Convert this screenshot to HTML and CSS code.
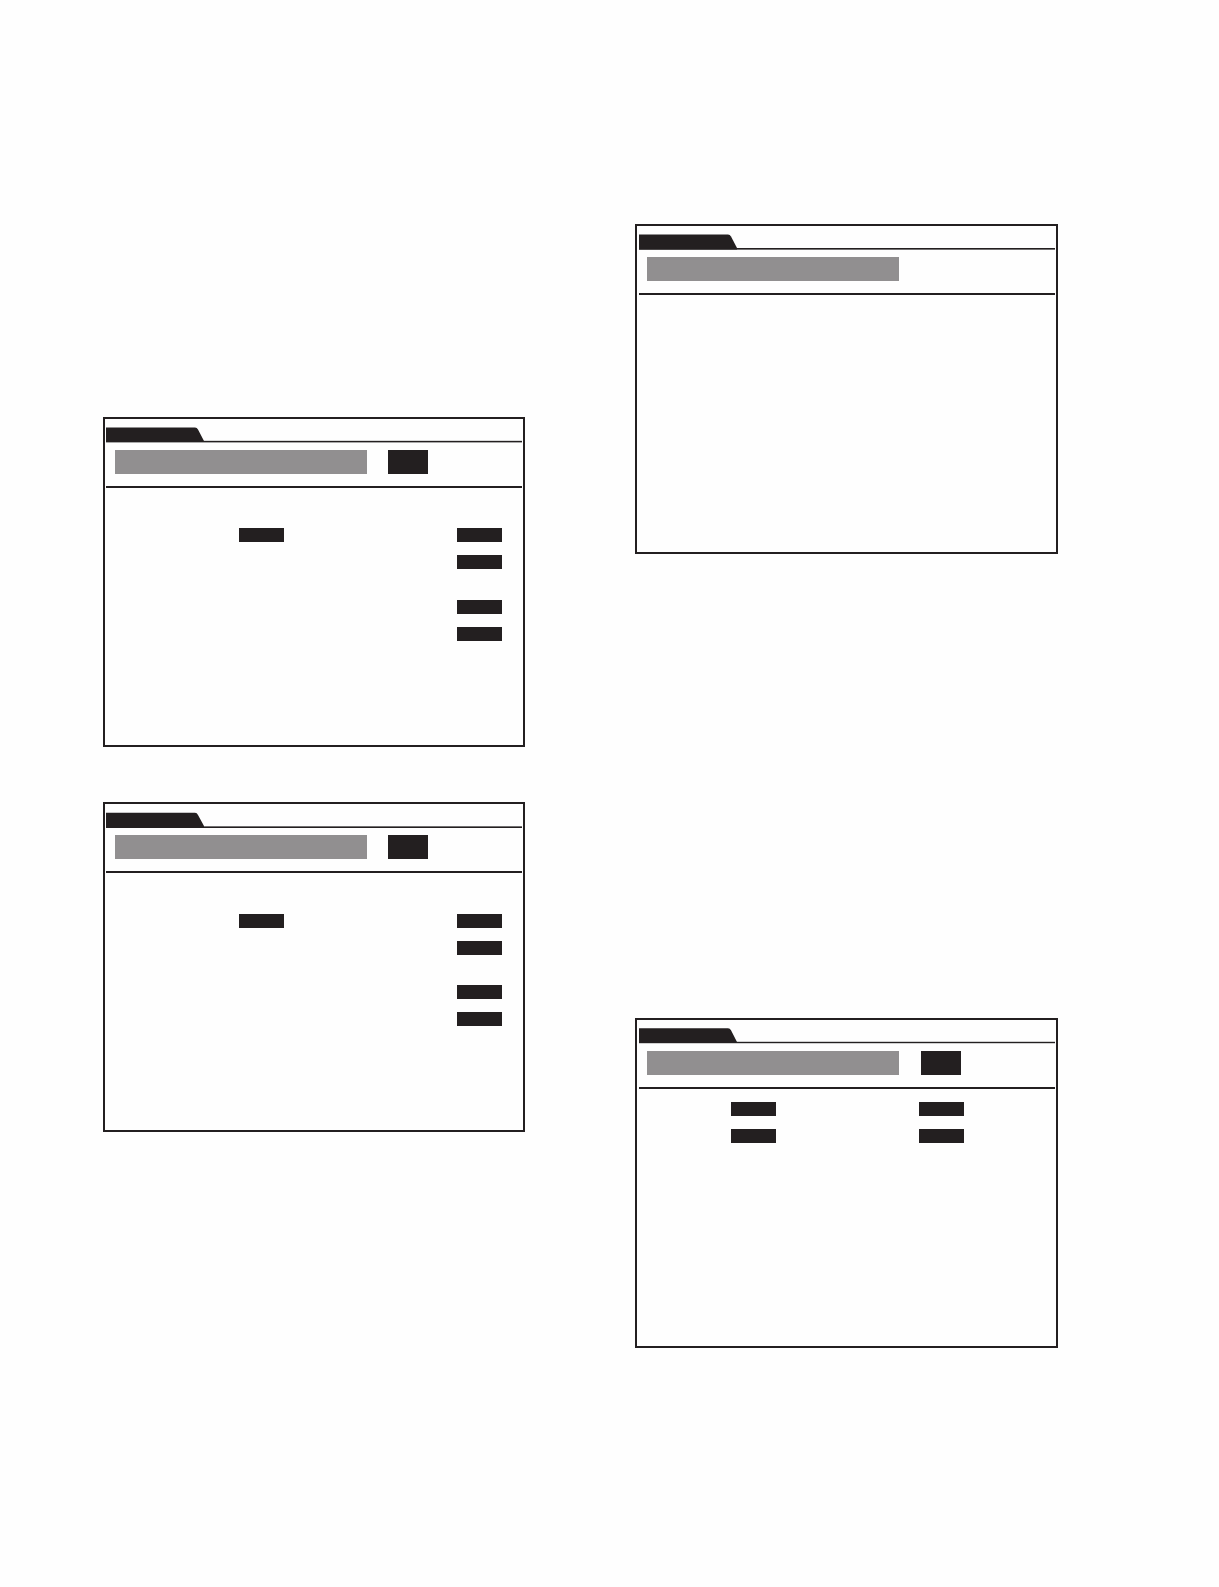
FILE: index.html
```html
<!DOCTYPE html>
<html lang="en">
<head>
<meta charset="utf-8">
<meta name="viewport" content="width=device-width, initial-scale=1">
<title>Screens</title>
<link rel="stylesheet" href="styles.css">
</head>
<body>
<main class="page">
  <div class="column column-left">
    <section class="screen">
      <div class="tab-strip strip-low">
        <svg class="tab" viewBox="0 0 98 16" aria-hidden="true"><path d="M0 .5H89Q91 .5 92 2.500L98 14V15H0Z"/></svg>
      </div>
      <div class="head"><div class="title-bar"></div><div class="badge"></div></div>
      <div class="body">
        <div class="group">
          <div class="row"><span class="chip"></span><span class="chip"></span></div>
          <div class="row"><span class="chip"></span></div>
        </div>
        <div class="group">
          <div class="row"><span class="chip"></span></div>
          <div class="row"><span class="chip"></span></div>
        </div>
      </div>
    </section>
    <section class="screen">
      <div class="tab-strip strip-bottom">
        <svg class="tab" viewBox="0 0 98 16" aria-hidden="true"><path d="M0 .8H89Q91 .8 92 3L98 14V16H0Z"/></svg>
      </div>
      <div class="head"><div class="title-bar"></div><div class="badge"></div></div>
      <div class="body body-shifted">
        <div class="group">
          <div class="row"><span class="chip"></span><span class="chip"></span></div>
          <div class="row"><span class="chip"></span></div>
        </div>
        <div class="group">
          <div class="row"><span class="chip"></span></div>
          <div class="row"><span class="chip"></span></div>
        </div>
      </div>
    </section>
  </div>
  <div class="column column-right">
    <section class="screen">
      <div class="tab-strip strip-top">
        <svg class="tab" viewBox="0 0 98 16" aria-hidden="true"><path d="M0 .6H89Q91 .6 92 2.500L98 14V15.600H0Z"/></svg>
      </div>
      <div class="head"><div class="title-bar"></div></div>
      <div class="body body-empty"></div>
    </section>
    <section class="screen">
      <div class="tab-strip strip-middle">
        <svg class="tab" viewBox="0 0 98 16" aria-hidden="true"><path d="M0 .3H89Q91 .3 92 2.300L98 14V15H0Z"/></svg>
      </div>
      <div class="head"><div class="title-bar"></div><div class="badge"></div></div>
      <div class="body body-short">
        <div class="group">
          <div class="row"><span class="chip"></span><span class="chip"></span></div>
          <div class="row"><span class="chip"></span><span class="chip"></span></div>
        </div>
      </div>
    </section>
  </div>
</main>
</body>
</html>
```

FILE: styles.css
```css
:root {
  --ink: #231f20;
  --grey: #918f90;
}

* {
  box-sizing: border-box;
}

body {
  margin: 0;
  background: #fefefe;
  font-family: "Liberation Sans", sans-serif;
}

.page {
  display: grid;
  grid-template-columns: 422fr 423fr;
  column-gap: 110px;
  align-items: start;
  padding: 224px 161px 239px 103px;
}

.column {
  display: flex;
  flex-direction: column;
}

.column-left {
  gap: 55px;
  padding-top: 193px;
}

.column-right {
  gap: 464px;
}

.screen {
  border: 2px solid var(--ink);
  padding: 8px 1px 0;
}

.column-right .screen {
  padding-left: 2px;
}

.tab-strip {
  display: flex;
  height: 16px;
  background-position: bottom;
  background-repeat: no-repeat;
  background-size: 100% 3px;
}

/* The hairline under each tab: three rows with a soft edge. */
.strip-low {
  background-image: linear-gradient(#d8d8d8 0 1px, var(--ink) 1px 2px, #a8a8a8 2px);
}

.strip-bottom {
  background-image: linear-gradient(transparent 0 1px, #727071 1px 2px, var(--ink) 2px);
}

.strip-top {
  background-image: linear-gradient(transparent 0 1px, var(--ink) 1px 2px, #727071 2px);
}

.strip-middle {
  background-image: linear-gradient(#cfcfcf 0 1px, var(--ink) 1px 2px, #cfcfcf 2px);
}

.tab {
  display: block;
  width: 98px;
  height: 16px;
  fill: var(--ink);
}

.head {
  display: flex;
  gap: 21px;
  padding: 7px 9px 12px;
  border-bottom: 2px solid var(--ink);
}

.column-right .head {
  gap: 22px;
  padding-left: 8px;
}

.title-bar {
  width: 252px;
  height: 24px;
  background: var(--grey);
}

.badge {
  width: 40px;
  height: 24px;
  background: var(--ink);
}

.body {
  display: flex;
  flex-direction: column;
  gap: 31px;
  padding: 40px 20px 104px;
}

.body-shifted {
  gap: 30px;
  padding-top: 41px;
}

.body-empty {
  padding: 0;
  min-height: 257px;
}

.body-short {
  padding: 13px 91px 203px;
}

.group {
  display: flex;
  flex-direction: column;
  gap: 13px;
}

.row {
  display: flex;
  justify-content: flex-end;
  gap: 173px;
}

.body-short .row {
  gap: 143px;
}

.chip {
  flex: none;
  width: 45px;
  height: 14px;
  background: var(--ink);
}
```
